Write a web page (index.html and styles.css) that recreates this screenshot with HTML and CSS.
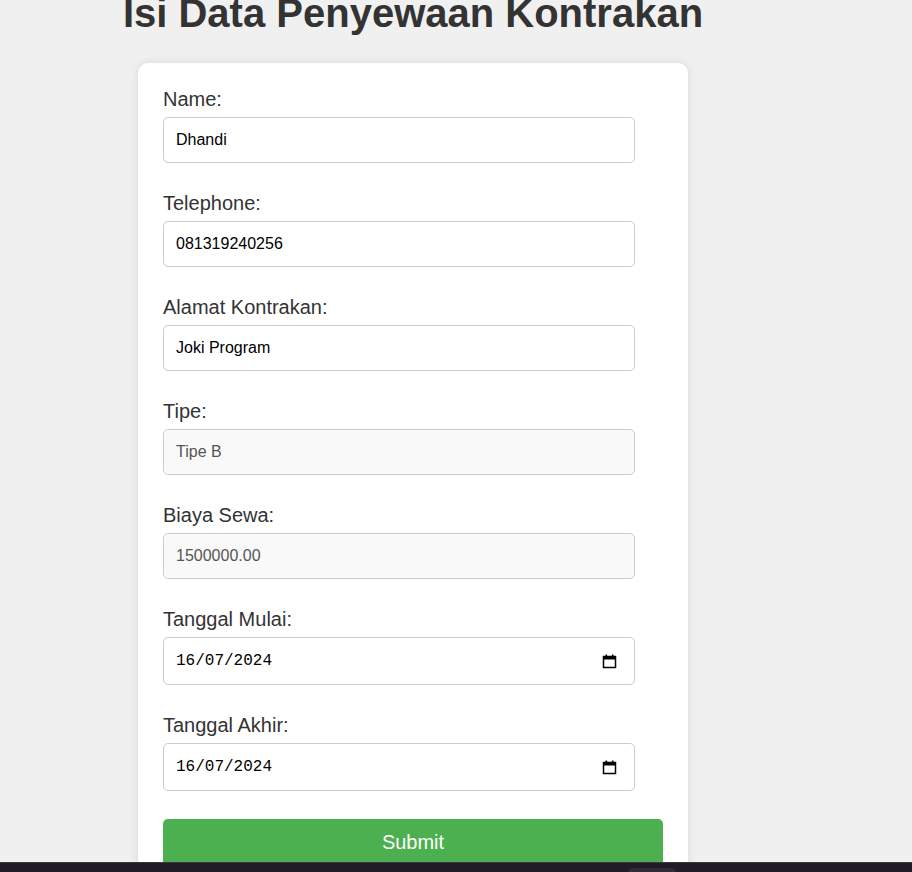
FILE: index.html
```html
<!DOCTYPE html>
<html lang="id">
<head>
<meta charset="utf-8">
<title>Isi Data Penyewaan Kontrakan</title>
<link rel="stylesheet" href="styles.css">
</head>
<body>
<div class="page">
  <h1 class="title">Isi Data Penyewaan Kontrakan</h1>
  <form class="card">
    <div class="field">
      <label class="label" for="name">Name:</label>
      <input class="input" id="name" type="text" value="Dhandi">
    </div>
    <div class="field">
      <label class="label" for="tel">Telephone:</label>
      <input class="input" id="tel" type="text" value="081319240256">
    </div>
    <div class="field">
      <label class="label" for="alamat">Alamat Kontrakan:</label>
      <input class="input" id="alamat" type="text" value="Joki Program">
    </div>
    <div class="field">
      <label class="label" for="tipe">Tipe:</label>
      <input class="input readonly" id="tipe" type="text" value="Tipe B" readonly>
    </div>
    <div class="field">
      <label class="label" for="biaya">Biaya Sewa:</label>
      <input class="input readonly" id="biaya" type="text" value="1500000.00" readonly>
    </div>
    <div class="field">
      <label class="label" for="mulai">Tanggal Mulai:</label>
      <div class="date-box">
        <input class="date-text" id="mulai" type="text" value="16/07/2024">
        <svg class="cal" width="15" height="15" viewBox="0 0 15 15" aria-hidden="true">
          <rect x="1.5" y="2.5" width="12" height="11" fill="none" stroke="#000" stroke-width="1.5"/>
          <rect x="1.5" y="2.5" width="12" height="3" fill="#000"/>
          <rect x="3.5" y="0.5" width="1.6" height="3" fill="#000"/>
          <rect x="9.9" y="0.5" width="1.6" height="3" fill="#000"/>
        </svg>
      </div>
    </div>
    <div class="field">
      <label class="label" for="akhir">Tanggal Akhir:</label>
      <div class="date-box">
        <input class="date-text" id="akhir" type="text" value="16/07/2024">
        <svg class="cal" width="15" height="15" viewBox="0 0 15 15" aria-hidden="true">
          <rect x="1.5" y="2.5" width="12" height="11" fill="none" stroke="#000" stroke-width="1.5"/>
          <rect x="1.5" y="2.5" width="12" height="3" fill="#000"/>
          <rect x="3.5" y="0.5" width="1.6" height="3" fill="#000"/>
          <rect x="9.9" y="0.5" width="1.6" height="3" fill="#000"/>
        </svg>
      </div>
    </div>
    <button class="submit" type="button">Submit</button>
  </form>
</div>
<div class="taskbar"><span class="taskbar-item"></span></div>
</body>
</html>
```
FILE: styles.css
```css
html, body {
  margin: 0;
  padding: 0;
  background: #f0f0f0;
  font-family: "Liberation Sans", Arial, sans-serif;
  color: #333;
  overflow: hidden;
}
.page {
  width: 826px;
  display: flex;
  flex-direction: column;
  align-items: center;
}
.title {
  margin: -10px 0 27px;
  font-size: 40px;
  line-height: 46px;
  font-weight: bold;
  color: #333;
}
.card {
  width: 500px;
  padding: 25px;
  background: #fff;
  border-radius: 10px;
  box-shadow: 0 0 10px rgba(0, 0, 0, 0.1);
  display: flex;
  flex-direction: column;
}
.field {
  display: flex;
  flex-direction: column;
  align-items: flex-start;
  margin-bottom: 29px;
}
.label {
  display: block;
  font-size: 20px;
  line-height: 23px;
  margin-bottom: 6px;
  color: #333;
}
.input {
  box-sizing: border-box;
  width: 472px;
  height: 46px;
  padding: 0 12px;
  border: 1px solid #ccc;
  border-radius: 5px;
  font-family: "Liberation Sans", Arial, sans-serif;
  font-size: 16px;
  color: #000;
  background: #fff;
  outline: none;
}
.readonly {
  background: #f9f9f9;
  color: #555;
}
.date-box {
  box-sizing: border-box;
  width: 472px;
  height: 48px;
  padding: 0 12px;
  border: 1px solid #ccc;
  border-radius: 5px;
  background: #fff;
  display: flex;
  align-items: center;
}
.date-text {
  flex: 1;
  min-width: 0;
  border: none;
  padding: 0;
  margin: 0;
  outline: none;
  background: transparent;
  font-family: "Liberation Mono", "Courier New", monospace;
  font-size: 16px;
  color: #000;
}
.cal {
  margin-right: 5px;
  flex: none;
}
.submit {
  margin-top: -1px;
  width: 500px;
  height: 47px;
  border: none;
  border-radius: 5px;
  background: #4caf50;
  color: #fff;
  font-family: "Liberation Sans", Arial, sans-serif;
  font-size: 20px;
  cursor: pointer;
}
.taskbar {
  position: fixed;
  left: 0;
  right: 0;
  bottom: 0;
  height: 9px;
  background: #201c25;
  border-top: 1px solid #3a373d;
}
.taskbar-item {
  position: absolute;
  left: 628px;
  top: 5px;
  width: 48px;
  height: 10px;
  border-radius: 5px;
  background: #2f2b34;
}
```
